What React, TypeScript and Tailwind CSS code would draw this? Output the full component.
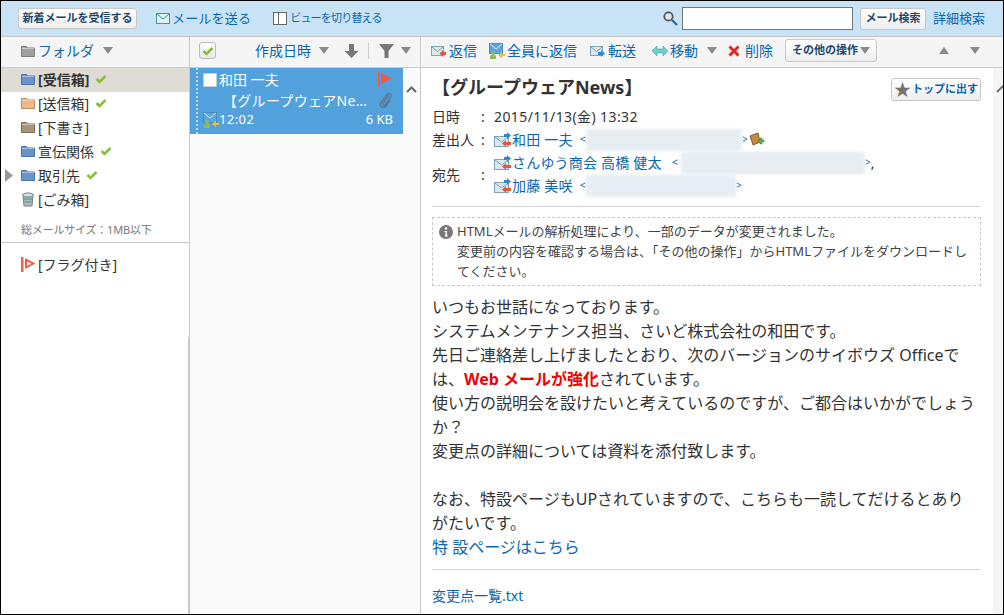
import React from 'react';

const Folder = ({ color = '#6b93cc', dark = '#4a74ad' }: { color?: string; dark?: string }) => (
  <svg width="14" height="12" viewBox="0 0 14 12" className="shrink-0">
    <path d="M.5 1.500h5l1 1.500h7v8.500h-13z" fill={color} stroke={dark} />
    <path d="M1 3.500h12" stroke="#fff" strokeOpacity=".45" />
  </svg>
);

const Check = () => (
  <svg width="12" height="10" viewBox="0 0 12 10" className="shrink-0">
    <path d="M1.500 5l3 3 6-6" fill="none" stroke="#8dbb3c" strokeWidth="2.600" />
  </svg>
);

const Tri = ({ up, color = '#8a8a8a', w = 10 }: { up?: boolean; color?: string; w?: number }) => (
  <svg width={w} height="7" viewBox="0 0 10 7" className="shrink-0">
    <path d={up ? 'M5 0l5 7H0z' : 'M0 0h10L5 7z'} fill={color} />
  </svg>
);

const Flag = () => (
  <svg width="16" height="15" viewBox="0 0 16 15" className="shrink-0">
    <path d="M1 0h2v15H1z" fill="#f05a4a" />
    <path d="M4 1l11 5.500L4 12z" fill="#f05a4a" />
  </svg>
);

const MailArrows = () => (
  <svg width="18" height="16" viewBox="0 0 18 16" className="shrink-0">
    <rect x=".5" y="4.500" width="14" height="10" fill="#dbe9ee" stroke="#7ea4b3" />
    <path d="M1 5l6.500 5L14 5" fill="none" stroke="#7ea4b3" />
    <path d="M10 1h3V-1l4 3.500L13 6V4h-3z" fill="#2f86d6" transform="translate(0 1)" />
    <path d="M17 10h-5V8l-4 3.500 4 3.500v-2h5z" fill="#e0593f" />
  </svg>
);

const MailIcon = ({ arrow }: { arrow: string }) => (
  <svg width="16" height="14" viewBox="0 0 16 14" className="shrink-0">
    <rect x=".5" y="2.500" width="12" height="9" fill="#dbe9ee" stroke="#7ea4b3" />
    <path d="M1 3l5.500 4.500L12 3" fill="none" stroke="#7ea4b3" />
    <path d={arrow === 'left' ? 'M15 8h-3V6L8.500 9.500 12 13v-2h3z' : 'M8 8h3V6l4 3.500L11 13v-2H8z'} fill={arrow === 'left' ? '#e0593f' : '#2f86d6'} />
  </svg>
);

const ReplyAll = () => (
  <svg width="16" height="16" viewBox="0 0 16 16" className="shrink-0">
    <rect x=".5" y=".5" width="13" height="10" fill="#5ba6dc" stroke="#4b8cbc" />
    <path d="M1 1l6 5 6-5" fill="none" stroke="#d8edf8" />
    <circle cx="4" cy="10" r="2" fill="#8dbb5c" />
    <path d="M1 16v-2.500c0-1 1-1.500 3-1.500s3 .5 3 1.500V16z" fill="#8dbb5c" />
    <path d="M16 11h-3V8.500L9 12l4 3.500V13h3z" fill="#f1bc2e" />
  </svg>
);

const Blur = ({ className }: { className: string }) => <span className={`inline-block bg-[#e6eef4] blur-[1.500px] ${className}`} />;

const Addr = ({ name, blur, gap = 'ml-[7px]', end }: { name: string; blur: string; gap?: string; end?: React.ReactNode }) => (
  <div className="flex items-center h-[23px] text-[#0b66b0]">
    <MailArrows />
    <span className="text-[14px] tracking-[0.2px] whitespace-nowrap">{name}</span>
    <span className={`text-[11px] ${gap}`}>&lt;</span>
    <Blur className={`h-[22px] ${blur}`} />
    <span className="text-[10px]">&gt;</span>
    {end}
  </div>
);

const FolderRow = ({ icon, label, check, active, arrow }: { icon: React.ReactNode; label: string; check?: boolean; active?: boolean; arrow?: boolean }) => (
  <div className={`flex items-center h-[24px] pl-[4px] pb-[2px] text-[14px] text-[#333] ${active ? 'bg-[#dfdcd6] font-bold' : ''}`}>
    <span className="w-[16px] shrink-0">{arrow && <svg width="8" height="13" viewBox="0 0 8 13"><path d="M0 0l8 6.500L0 13z" fill="#999" /></svg>}</span>
    {icon}
    <span className="ml-[3px] whitespace-nowrap">{label}</span>
    {check && <span className="ml-[6px]"><Check /></span>}
  </div>
);

const Action = ({ icon, label, className }: { icon: React.ReactNode; label: string; className: string }) => (
  <div className={`flex items-center gap-[2px] text-[14px] text-[#0b66b0] whitespace-nowrap ${className}`}>
    {icon}
    <span>{label}</span>
  </div>
);

export default function App() {
  return (
    <div className="w-[1004px] h-[615px] overflow-hidden flex flex-col bg-white border border-black font-['Noto_Sans','Noto_Sans_CJK_JP',sans-serif]">
      <div className="h-[36px] shrink-0 flex items-center bg-[#c8e3f5] border-b border-[#c4c4c4] pl-[17px] pr-[18px]">
        <button className="h-[21px] w-[119px] rounded-[3px] border border-[#c8c8c8] bg-gradient-to-b from-white to-[#eeeeee] text-[11px] font-bold text-[#22466b] whitespace-nowrap">新着メールを受信する</button>
        <div className="flex items-center ml-[19px] text-[13px] tracking-[0.2px] text-[#0b66b0]">
          <svg width="14" height="11" viewBox="0 0 14 11"><rect x=".5" y=".5" width="13" height="10" fill="#dff2f2" stroke="#3f9c9c" /><path d="M1 1l6 5 6-5" fill="none" stroke="#3f9c9c" /></svg>
          <span className="ml-[2px]">メールを送る</span>
        </div>
        <div className="flex items-center ml-[22px] text-[11px] tracking-[-0.8px] text-[#0b66b0]">
          <svg width="14" height="13" viewBox="0 0 14 13"><rect x=".5" y=".5" width="13" height="12" fill="#fff" stroke="#666" /><path d="M5.500 0v13" stroke="#666" /></svg>
          <span className="ml-[3px]">ビューを切り替える</span>
        </div>
        <div className="flex-1" />
        <svg width="15" height="15" viewBox="0 0 15 15" className="mr-[4px]">
          <circle cx="5.500" cy="5.500" r="4.200" fill="#dfe9ef" stroke="#555" strokeWidth="1.800" />
          <path d="M9 9l5 5" stroke="#2a6ea8" strokeWidth="2.400" />
        </svg>
        <input className="w-[171px] h-[23px] bg-white border border-[#767676]" />
        <button className="ml-[7px] h-[22px] w-[66px] rounded-[3px] border border-[#c8c8c8] bg-gradient-to-b from-white to-[#eeeeee] text-[11px] font-bold text-[#22466b] whitespace-nowrap">メール検索</button>
        <span className="ml-[7px] text-[13px] text-[#0b66b0] whitespace-nowrap">詳細検索</span>
      </div>

      <div className="flex-1 flex min-h-0">
        <div className="relative w-[189px] shrink-0 flex flex-col border-r border-[#c9c9c9]">
          <div className="h-[31px] shrink-0 flex items-center pl-[20px] pb-[3px] bg-[#f5f5f5] border-b border-[#c9c9c9] text-[14px] text-[#0b66b0]">
            <Folder color="#a0a0a0" dark="#7d7d7d" />
            <span className="ml-[3px]">フォルダ</span>
            <span className="ml-[9px]"><Tri /></span>
          </div>
          <FolderRow active icon={<Folder />} label="[受信箱]" check />
          <FolderRow icon={<Folder color="#efb888" dark="#c28a58" />} label="[送信箱]" check />
          <FolderRow icon={<Folder color="#a89478" dark="#7b6a52" />} label="[下書き]" />
          <FolderRow icon={<Folder />} label="宣伝関係" check />
          <FolderRow arrow icon={<Folder />} label="取引先" check />
          <FolderRow
            icon={
              <svg width="14" height="15" viewBox="0 0 14 15" className="shrink-0">
                <path d="M2 3h10l-1 11H3z" fill="#a9bcc2" stroke="#6e8289" />
                <ellipse cx="7" cy="3" rx="5.500" ry="2" fill="#d7e2e5" stroke="#6e8289" />
                <path d="M3 7h8M3.500 10h7" stroke="#6e8289" />
              </svg>
            }
            label="[ごみ箱]"
          />
          <div className="h-[31px] pl-[20px] pt-[6px] flex items-center text-[11px] tracking-[-0.2px] text-[#777] border-b border-[#c9c9c9] mb-[9px] whitespace-nowrap">総メールサイズ：1MB以下</div>
          <div className="flex items-center pl-[19px] h-[24px] text-[14px] text-[#333]">
            <svg width="17" height="15" viewBox="0 0 17 15" className="shrink-0">
              <path d="M1 0h2.500v15H1z" fill="#f0604e" />
              <path d="M5 1v11l10.500-5.500zM7 4.500l4.500 2L7 9z" fill="#f0604e" fillRule="evenodd" />
            </svg>
            <span className="ml-px">[フラグ付き]</span>
          </div>
          <span className="absolute right-0 top-[300px] bottom-0 w-px bg-[#c9c9c9]" />
        </div>

        <div className="w-[231px] shrink-0 flex flex-col border-r border-[#c9c9c9] bg-[#fafafa]">
          <div className="h-[31px] shrink-0 flex items-center bg-[#f5f5f5] border-b border-[#c9c9c9] pl-[9px] pb-[3px] text-[14px] text-[#0b66b0]">
            <span className="w-[17px] h-[17px] rounded-[3px] border border-[#bbb] bg-gradient-to-b from-white to-[#e8e8e8] flex items-center justify-center"><Check /></span>
            <span className="ml-[39px] whitespace-nowrap">作成日時</span>
            <span className="ml-[8px]"><Tri /></span>
            <svg width="15" height="14" viewBox="0 0 15 14" className="ml-[15px]"><path d="M5 0h5v7h4.500L7.500 14 .5 7H5z" fill="#777" /></svg>
            <span className="ml-[9px] w-px h-[16px] bg-[#ccc]" />
            <svg width="15" height="14" viewBox="0 0 15 14" className="ml-[10px]"><path d="M0 0h15L9.500 7v7h-4V7z" fill="#777" /></svg>
            <span className="ml-[7px]"><Tri /></span>
          </div>
          <div className="flex flex-1 min-h-0">
            <div className="relative w-[213px] h-[66px] bg-[#52a0dc] text-white pl-[13px] pr-[10px] pt-[2px]">
              <span className="absolute left-[6px] top-0 bottom-0 border-l-[2px] border-dotted border-[#b9d9f0]" />
              <div className="flex items-center h-[19px] text-[14px]">
                <span className="w-[14px] h-[14px] bg-white border border-[#ccc] rounded-[1px]" />
                <span className="ml-[2px]">和田 一夫</span>
                <span className="flex-1" />
                <Flag />
              </div>
              <div className="flex items-center h-[22px] text-[14px]">
                <span className="ml-[20px] whitespace-nowrap tracking-[0.3px]">【グループウェアNe…</span>
                <span className="flex-1" />
                <svg width="13" height="16" viewBox="0 0 13 16" className="mr-[1px]"><path d="M10 3L4 11c-1.500 2 1 3.500 2.500 1.500l5-7c2-3-1.500-5.500-3.500-3L2 10.500c-2.500 3.500 2 7 5 3.500l4-5.500" fill="none" stroke="#5b7892" strokeWidth="1.300" /></svg>
              </div>
              <div className="flex items-center h-[17px] text-[13px]">
                <ReplyAll />
                <span className="tracking-[0.4px]">12:02</span>
                <span className="flex-1" />
                <span>6 KB</span>
              </div>
            </div>
            <div className="flex-1 flex justify-center pt-[18px]">
              <svg width="11" height="7" viewBox="0 0 11 7"><path d="M1 6l4.500-4.500L10 6" fill="none" stroke="#666" strokeWidth="2" /></svg>
            </div>
          </div>
        </div>

        <div className="flex-1 min-w-0 flex flex-col">
          <div className="h-[31px] shrink-0 flex items-center bg-[#f5f5f5] border-b border-[#c9c9c9] pl-[10px] pr-[22px] pb-[3px]">
            <Action className="" icon={<MailIcon arrow="left" />} label="返信" />
            <Action className="ml-[12px]" icon={<ReplyAll />} label="全員に返信" />
            <Action className="ml-[13px]" icon={<MailIcon arrow="right" />} label="転送" />
            <Action
              className="ml-[16px]"
              icon={<svg width="16" height="12" viewBox="0 0 16 12"><path d="M0 6l5-5v3h6V1l5 5-5 5V8H5v3z" fill="#6ccfc8" stroke="#3ea7a0" strokeWidth=".6" /></svg>}
              label="移動"
            />
            <span className="ml-[9px]"><Tri /></span>
            <Action
              className="ml-[11px]"
              icon={<svg width="12" height="12" viewBox="0 0 12 12" className="mr-[3px]"><path d="M1.500 1.500l9 9M10.500 1.500l-9 9" stroke="#dd2b1f" strokeWidth="3" /></svg>}
              label="削除"
            />
            <button className="ml-[12px] flex items-center justify-center gap-[2px] w-[92px] h-[23px] rounded-[3px] border border-[#c8c8c8] bg-gradient-to-b from-white to-[#eeeeee] text-[11px] font-bold text-[#22466b] whitespace-nowrap">
              その他の操作<Tri />
            </button>
            <div className="flex-1" />
            <Tri up w={12} />
            <span className="ml-[19px]"><Tri w={12} /></span>
          </div>

          <div className="flex-1 min-h-0 flex">
            <div className="flex-1 min-w-0 pl-[11px] pr-[12px]">
              <div className="flex items-start justify-between pt-[6px] h-[37px]">
                <div className="text-[18px] font-bold text-[#333] whitespace-nowrap">【グループウェアNews】</div>
                <button className="mt-[4px] flex items-center justify-center w-[90px] h-[23px] rounded-[3px] border border-[#c8c8c8] bg-gradient-to-b from-white to-[#eeeeee] text-[11px] font-bold text-[#0b66b0] whitespace-nowrap">
                  <span className="text-[#77726a] text-[17px] leading-none mr-[1px]">★</span>トップに出す
                </button>
              </div>
              <div className="text-[14px] text-[#333]">
                <div className="flex items-center h-[23px]">
                  <span className="w-[49px]">日時</span>
                  <span className="w-[13px]">:</span>
                  <span className="whitespace-nowrap tracking-[0.4px]">2015/11/13(金) 13:32</span>
                </div>
                <div className="flex items-center h-[23px]">
                  <span className="w-[49px]">差出人</span>
                  <span className="w-[13px]">:</span>
                  <Addr
                    name="和田 一夫"
                    blur="w-[156px]"
                    end={
                      <svg width="16" height="15" viewBox="0 0 16 15" className="ml-px">
                        <path d="M1 4l8-3 2 9-7 3z" fill="#c58a3f" stroke="#8a5a22" />
                        <path d="M11 6h2v2h2v2h-2v2h-2v-2H9V8h2z" fill="#5cb04a" stroke="#3b8a2f" strokeWidth=".5" />
                      </svg>
                    }
                  />
                </div>
                <div className="flex items-center">
                  <span className="w-[49px]">宛先</span>
                  <span className="w-[13px]">:</span>
                  <div>
                    <Addr name="さんゆう商会 高橋 健太" blur="w-[184px] ml-[3px]" gap="ml-[10px]" end={<span className="text-[#333] text-[14px]">,</span>} />
                    <Addr name="加藤 美咲" blur="w-[150px]" />
                  </div>
                </div>
              </div>
              <div className="border-t border-[#d5d5d5] mt-[9px]" />
              <div className="border border-dashed border-[#c9c9c9] mt-[10px] h-[69px] pl-[6px] pt-[3px] pr-[6px] flex text-[13px] leading-[20px] text-[#444]">
                <svg width="14" height="14" viewBox="0 0 14 14" className="mt-[4px] shrink-0">
                  <circle cx="7" cy="7" r="7" fill="#777" />
                  <circle cx="7" cy="3.500" r="1.300" fill="#fff" />
                  <path d="M5.500 6h2.500v4.500h1v1H5.500v-1h1V7h-1z" fill="#fff" />
                </svg>
                <div className="ml-[4px]">
                  HTMLメールの解析処理により、一部のデータが変更されました。<br />
                  変更前の内容を確認する場合は、「その他の操作」からHTMLファイルをダウンロードしてください。
                </div>
              </div>
              <div className="mt-[9px] text-[16px] leading-[24px] text-[#333]">
                <div>いつもお世話になっております。</div>
                <div>システムメンテナンス担当、さいど株式会社の和田です。</div>
                <div>先日ご連絡差し上げましたとおり、次のバージョンのサイボウズ Officeでは、<span className="font-bold text-[#f00000]">Web メールが強化</span>されています。</div>
                <div>使い方の説明会を設けたいと考えているのですが、ご都合はいかがでしょうか？</div>
                <div>変更点の詳細については資料を添付致します。</div>
                <div className="h-[24px]" />
                <div>なお、特設ページもUPされていますので、こちらも一読してだけるとあり<br />がたいです。</div>
                <div className="text-[#0b66b0]">特 設ページはこちら</div>
              </div>
              <div className="border-t border-[#d5d5d5] mt-[10px]" />
              <div className="mt-[15px] text-[14px] text-[#0b66b0]">変更点一覧.txt</div>
            </div>
            <div className="w-[10px] shrink-0 bg-[#f5f5f5] overflow-hidden pt-[17px] pl-[3px]">
              <svg width="7" height="8" viewBox="0 0 7 8" className="block"><path d="M1 7l5.500-5.500L12 7" fill="none" stroke="#777" strokeWidth="2" /></svg>
            </div>
          </div>
        </div>
      </div>
    </div>
  );
}
